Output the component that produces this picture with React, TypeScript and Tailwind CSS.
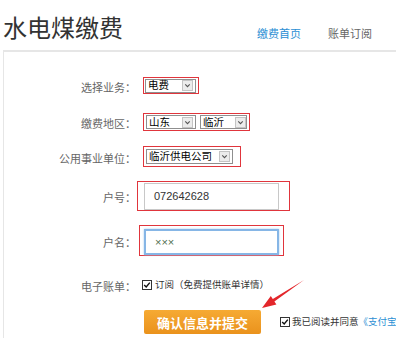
import React from "react";

const cjk = { fontFamily: '"Noto Sans CJK SC", "Noto Sans", sans-serif' };
const latin = { fontFamily: '"Liberation Sans", "Noto Sans CJK SC", sans-serif' };

function Arrow() {
  return (
    <svg viewBox="0 0 10 10" className="w-[9px] h-[9px]">
      <path d="M2.5 3.8 L5 6.3 L7.5 3.8" fill="none" stroke="#555" strokeWidth="1.2" />
    </svg>
  );
}

function Select({ text, width, height, arrowGap = 2 }: { text: string; width: number; height: number; arrowGap?: number }) {
  return (
    <div
      className="flex shrink-0 items-center justify-between border border-[#8f8f8f] bg-white pl-[2px]"
      style={{ width, height, paddingRight: arrowGap }}
    >
      <span className="text-[10.5px] leading-none text-black" style={cjk}>
        {text}
      </span>
      <div className="flex h-[11px] w-[11px] items-center justify-center border border-[#c4c4c4] bg-[#ececec]">
        <Arrow />
      </div>
    </div>
  );
}

function Check() {
  return (
    <div className="flex h-[10px] w-[10px] shrink-0 items-center justify-center border border-[#333] bg-white">
      <svg viewBox="0 0 10 10" className="w-[8px] h-[8px]">
        <path d="M1.5 5 L4 7.5 L8.5 2" fill="none" stroke="#111" strokeWidth="1.8" />
      </svg>
    </div>
  );
}

function Label({ children }: { children: React.ReactNode }) {
  return (
    <div className="w-[132px] shrink-0 pt-[3px] text-right text-[11px] leading-none text-[#666]" style={cjk}>
      {children}
    </div>
  );
}

export default function App() {
  return (
    <div className="relative h-[338px] w-[396px] overflow-hidden bg-white">
      {/* Header */}
      <div className="flex h-[50px] items-start">
        <h1 className="ml-[3px] mt-[15px] text-[24px] leading-[24px] text-[#333]" style={cjk}>
          水电煤缴费
        </h1>
        <div className="ml-auto mr-[24px] mt-[27px] flex gap-[27px] text-[11px] leading-[12px]" style={cjk}>
          <span className="text-[#2b8fd4]">缴费首页</span>
          <span className="text-[#666]">账单订阅</span>
        </div>
      </div>

      {/* Form box */}
      <div className="ml-[3px] h-[300px] border-l border-t-2 border-[#e6e6e6]">
        {/* 选择业务 */}
        <div className="mt-[25px] flex h-[17px] items-center">
          <Label>选择业务：</Label>
          <div className="ml-[7px] flex h-[17px] w-[56px] items-center border border-[#e0353c] pl-[1px]">
            <Select text="电费" width={51} height={14} />
          </div>
        </div>

        {/* 缴费地区 */}
        <div className="mt-[19px] flex h-[18px] items-center">
          <Label>缴费地区：</Label>
          <div className="ml-[7px] flex h-[18px] w-[107px] items-center gap-[4px] border border-[#e0353c] pl-[2px]">
            <Select text="山东" width={50} height={14} />
            <Select text="临沂" width={47} height={14} arrowGap={0} />
          </div>
        </div>

        {/* 公用事业单位 */}
        <div className="mt-[15px] flex h-[21px] items-center">
          <Label>公用事业单位：</Label>
          <div className="ml-[7px] flex h-[21px] w-[98px] items-center border border-[#e0353c] pl-[2px]">
            <Select text="临沂供电公司" width={87} height={15} />
          </div>
        </div>

        {/* 户号 */}
        <div className="mt-[14px] flex h-[30px] items-center">
          <Label>户号：</Label>
          <div className="ml-[1px] h-[30px] w-[153px] border border-[#e0353c] pl-[6px] pt-[1px]">
            <div
              className="flex h-[27px] w-[135px] items-center border border-[#c8c8c8] bg-white pl-[9px] text-[11px] text-[#333]"
              style={latin}
            >
              072642628
            </div>
          </div>
        </div>

        {/* 户名 */}
        <div className="mt-[14px] flex h-[31px] items-center">
          <Label>户名：</Label>
          <div className="ml-[3px] h-[31px] w-[145px] border border-[#e0353c] pl-[4px] pt-[3px]">
            <div
              className="flex h-[26px] w-[135px] items-center border-2 border-[#86b6e6] bg-white pl-[9px] text-[11px] text-[#4f6f4f] shadow-[0_0_2px_#a9ccef]"
              style={latin}
            >
              ×××
            </div>
          </div>
        </div>

        {/* 电子账单 */}
        <div className="mt-[23px] flex h-[12px] items-center">
          <Label>电子账单：</Label>
          <div className="ml-[6px] flex items-center gap-[3px]">
            <Check />
            <span className="text-[9.5px] leading-none text-[#333]" style={cjk}>
              订阅（免费提供账单详情）
            </span>
          </div>
        </div>

        {/* Submit */}
        <div className="mt-[19px] flex h-[24px] items-center">
          <div className="w-[132px] shrink-0" />
          <button
            className="ml-[8px] h-[24px] w-[117px] shrink-0 whitespace-nowrap rounded-[2px] bg-gradient-to-b from-[#f6aa33] to-[#ea921c] text-[13px] font-bold leading-none text-white"
            style={cjk}
          >
            确认信息并提交
          </button>
          <div className="ml-[19px] flex shrink-0 items-center gap-[2px] whitespace-nowrap">
            <Check />
            <span className="text-[9.5px] leading-none text-[#333]" style={cjk}>
              我已阅读并同意<span className="text-[#2b8fd4]">《支付宝服务协议》</span>
            </span>
          </div>
        </div>
      </div>

      {/* Red annotation arrow */}
      <svg className="pointer-events-none absolute left-0 top-0 h-[338px] w-[396px]" viewBox="0 0 396 338">
        <polygon
          points="262,308 276.4,304.4 274.4,301.4 304,280 272.8,299 270.8,296"
          fill="#e3262b"
        />
      </svg>
    </div>
  );
}
